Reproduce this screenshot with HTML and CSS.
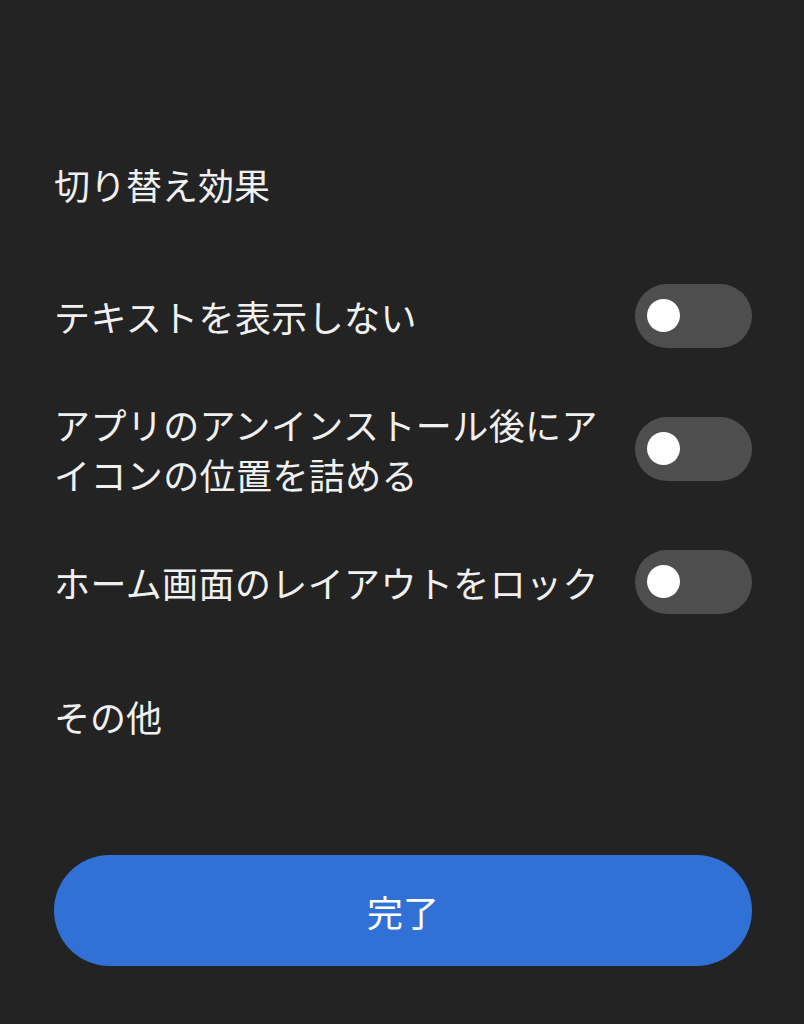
FILE: index.html
```html
<!DOCTYPE html>
<html lang="ja">
<head>
  <meta charset="UTF-8" />
  <meta name="viewport" content="width=device-width, initial-scale=1.0"/>
  <title>ホーム画面の設定</title>
  <link rel="stylesheet" href="styles.css">
</head>
<body>
  <div class="sheet">
    <div class="list">
      <div class="row header">切り替え効果</div>

      <div class="row">
        <span class="label">テキストを表示しない</span>
        <span class="toggle"><span class="knob"></span></span>
      </div>

      <div class="row">
        <span class="label">アプリのアンインストール後にアイコンの位置を詰める</span>
        <span class="toggle"><span class="knob"></span></span>
      </div>

      <div class="row">
        <span class="label">ホーム画面のレイアウトをロック</span>
        <span class="toggle"><span class="knob"></span></span>
      </div>

      <div class="row header">その他</div>
    </div>

    <button class="done">完了</button>
  </div>
</body>
</html>
```

FILE: styles.css
```css
body {
  margin: 0;
  background: #232323;
  color: #f0f0f0;
  font-family: "Noto Sans CJK JP", "Noto Sans", sans-serif;
  overflow: hidden;
}
.sheet {
  min-height: 100vh;
  box-sizing: border-box;
  padding: 119px 52px 0 54px;
  background: #232323;
}
.list {
  display: flex;
  flex-direction: column;
}
.row {
  display: flex;
  align-items: center;
  justify-content: space-between;
  gap: 12px;
  height: 133px;
  font-size: 36px;
  line-height: 50px;
}
.row.header {
  height: 130px;
}
.row.header:last-child {
  height: 136px;
}
.label {
  flex: 1;
  letter-spacing: 0.4px;
}
.toggle {
  flex: none;
  width: 117px;
  height: 64px;
  border-radius: 32px;
  background: #4e4e4e;
  display: flex;
  align-items: center;
  padding-left: 12px;
  box-sizing: border-box;
}
.knob {
  width: 33px;
  height: 33px;
  border-radius: 50%;
  background: #ffffff;
}
.done {
  display: block;
  width: 100%;
  height: 111px;
  margin-top: 71px;
  border: none;
  border-radius: 56px;
  background: #3171d6;
  color: #ffffff;
  font-family: inherit;
  font-size: 36px;
  padding: 0;
}
```
